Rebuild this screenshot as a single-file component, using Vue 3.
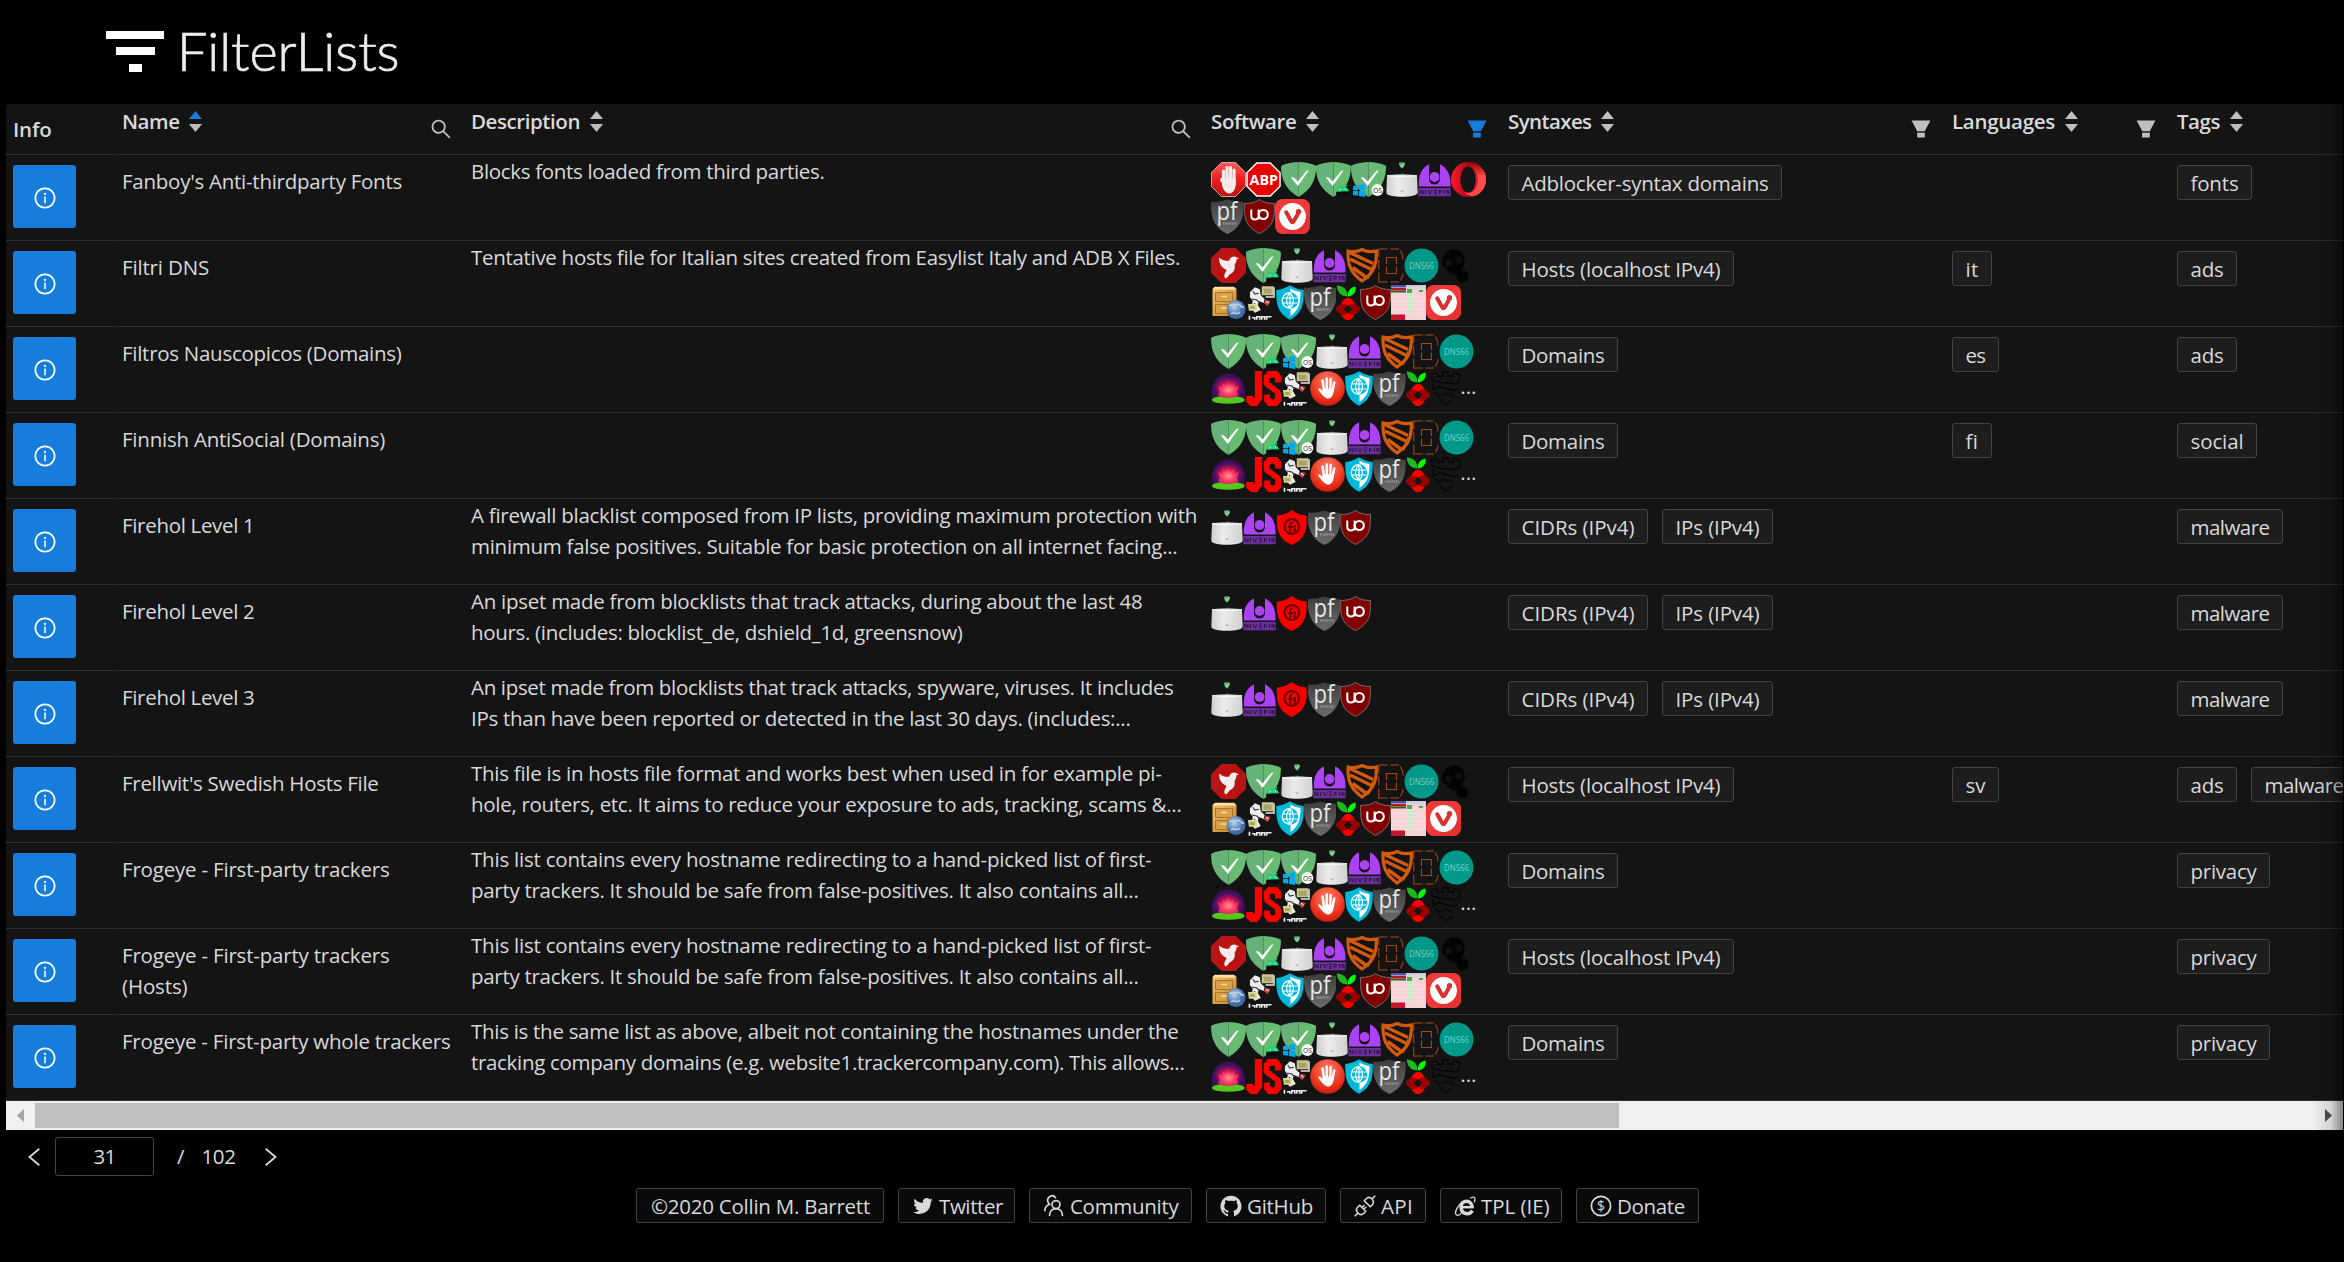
<script setup>
const columns = [
  { key: 'info', title: 'Info', w: 38.5 },
  { key: 'name', title: 'Name', w: 57.5, sort: 'asc', icon: 'search' },
  { key: 'desc', title: 'Description', w: 109, sort: 'none', icon: 'search' },
  { key: 'soft', title: 'Software', w: 85.5, sort: 'none', icon: 'filter', active: true },
  { key: 'syn', title: 'Syntaxes', w: 83.5, sort: 'none', icon: 'filter' },
  { key: 'lang', title: 'Languages', w: 103, sort: 'none', icon: 'filter' },
  { key: 'tags', title: 'Tags', w: 43, sort: 'none' },
]

const iconWidth = {
  hand: 35, abp: 35, ag: 35.3, agAndroid: 34.9, agWin: 35, router: 32, diversion: 33, opera: 35,
  pf: 32.8, ublock: 31, vivaldi: 35, bird: 35, blokada: 32.2, frame: 25.8, dns66: 35, mask: 35,
  cabinet: 35, hostsman: 29.5, globe: 28, pihole: 24, umatrix: 35, lotus: 34.7, js: 35.3,
  palm: 35, tower: 31, fire: 31.5,
}

// lettering that sits on top of an icon's artwork
const iconLabel = {
  abp: { t: 'ABP', x: 3.5, y: 22.8, size: 14.5, len: 28.5, fill: '#fff', weight: 700 },
  agWin: { t: 'OS', x: 22, y: 30.8, size: 7.5, len: 9, fill: '#333', weight: 400 },
  pf: { t: 'pf', x: 5.5, y: 21, size: 26, len: 21, fill: '#e6e6e6', weight: 400 },
  dns66: { t: 'DNS66', x: 5, y: 21, size: 9.5, len: 25, fill: '#7fd0c6', weight: 400 },
}

const fontsSoft = [
  ['hand', 'abp', 'ag', 'agAndroid', 'agWin', 'router', 'diversion', 'opera'],
  ['pf', 'ublock', 'vivaldi'],
]
const hostsSoft = [
  ['bird', 'agAndroid', 'router', 'diversion', 'blokada', 'frame', 'dns66', 'mask'],
  ['cabinet', 'hostsman', 'globe', 'pf', 'pihole', 'ublock', 'umatrix', 'vivaldi'],
]
const domainSoft = [
  ['ag', 'agAndroid', 'agWin', 'router', 'diversion', 'blokada', 'frame', 'dns66'],
  ['lotus', 'js', 'hostsman', 'palm', 'globe', 'pf', 'pihole', 'tower', 'more'],
]
const ipSoft = [['router', 'diversion', 'fire', 'pf', 'ublock']]

const T = {
  adblock: ['Adblocker-syntax domains', 274],
  hosts: ['Hosts (localhost IPv4)', 226],
  domains: ['Domains', 110],
  cidr: ['CIDRs (IPv4)', 140],
  ips: ['IPs (IPv4)', 111],
  it: ['it', 40], es: ['es', 47], fi: ['fi', 40], sv: ['sv', 47],
  fonts: ['fonts', 75], ads: ['ads', 60], social: ['social', 80],
  malware: ['malware', 106], privacy: ['privacy', 93],
}

const frogeye = [
  ['This list contains every hostname redirecting to a hand-picked list of first-', 680.5],
  ['party trackers. It should be safe from false-positives. It also contains all...', 667.5],
]

const rows = [
  { name: [["Fanboy's Anti-thirdparty Fonts", 280]], desc: [['Blocks fonts loaded from third parties.', 353.5]], soft: fontsSoft, syn: [T.adblock], lang: [], tags: [T.fonts] },
  { name: [['Filtri DNS', 87]], desc: [['Tentative hosts file for Italian sites created from Easylist Italy and ADB X Files.', 709]], soft: hostsSoft, syn: [T.hosts], lang: [T.it], tags: [T.ads] },
  { name: [['Filtros Nauscopicos (Domains)', 279.5]], desc: [], soft: domainSoft, syn: [T.domains], lang: [T.es], tags: [T.ads] },
  { name: [['Finnish AntiSocial (Domains)', 263]], desc: [], soft: domainSoft, syn: [T.domains], lang: [T.fi], tags: [T.social] },
  { name: [['Firehol Level 1', 132.5]], desc: [['A firewall blacklist composed from IP lists, providing maximum protection with', 726], ['minimum false positives. Suitable for basic protection on all internet facing...', 706.5]], soft: ipSoft, syn: [T.cidr, T.ips], lang: [], tags: [T.malware] },
  { name: [['Firehol Level 2', 132.5]], desc: [['An ipset made from blocklists that track attacks, during about the last 48', 671.5], ['hours. (includes: blocklist_de, dshield_1d, greensnow)', 491.5]], soft: ipSoft, syn: [T.cidr, T.ips], lang: [], tags: [T.malware] },
  { name: [['Firehol Level 3', 132.5]], desc: [['An ipset made from blocklists that track attacks, spyware, viruses. It includes', 702.5], ['IPs than have been reported or detected in the last 30 days. (includes:...', 659.5]], soft: ipSoft, syn: [T.cidr, T.ips], lang: [], tags: [T.malware] },
  { name: [["Frellwit's Swedish Hosts File", 256.5]], desc: [['This file is in hosts file format and works best when used in for example pi-', 690.5], ['hole, routers, etc. It aims to reduce your exposure to ads, tracking, scams &...', 710.5]], soft: hostsSoft, syn: [T.hosts], lang: [T.sv], tags: [T.ads, T.malware] },
  { name: [['Frogeye - First-party trackers', 267.5]], desc: frogeye, soft: domainSoft, syn: [T.domains], lang: [], tags: [T.privacy] },
  { name: [['Frogeye - First-party trackers', 267.5], ['(Hosts)', 65.5]], desc: frogeye, soft: hostsSoft, syn: [T.hosts], lang: [], tags: [T.privacy] },
  { name: [['Frogeye - First-party whole trackers', 328.5]], desc: [['This is the same list as above, albeit not containing the hostnames under the', 707.5], ['tracking company domains (e.g. website1.trackercompany.com). This allows...', 713.5]], soft: domainSoft, syn: [T.domains], lang: [], tags: [T.privacy] },
]

const links = [
  { text: '©2020 Collin M. Barrett', w: 248, tw: 219 },
  { text: 'Twitter', icon: 'twitter', w: 117, tw: 64 },
  { text: 'Community', icon: 'community', w: 163, tw: 108.5 },
  { text: 'GitHub', icon: 'github', w: 120, tw: 66 },
  { text: 'API', icon: 'api', w: 86, tw: 32 },
  { text: 'TPL (IE)', icon: 'ie', w: 122, tw: 68.5 },
  { text: 'Donate', icon: 'donate', w: 123, tw: 68 },
]

// v-fit="width": tracks the text so that it fills the given width
const vFit = {
  mounted(el, { value }) {
    const natural = el.getBoundingClientRect().width
    el.style.letterSpacing = (value - natural) / el.textContent.length + 'px'
  },
}
</script>

<template>
  <div class="page">
    <svg class="defs" width="0" height="0" aria-hidden="true">
      <defs>
        <linearGradient id="gOct" x1="0" y1="0" x2="0" y2="1"><stop offset="0" stop-color="#ff5a5a" /><stop offset=".5" stop-color="#e81f1f" /><stop offset="1" stop-color="#c01010" /></linearGradient>
        <linearGradient id="gOpera" x1="0" y1="0" x2="1" y2="0"><stop offset="0" stop-color="#ff1b2d" /><stop offset=".55" stop-color="#a70014" /><stop offset="1" stop-color="#ff4b4b" /></linearGradient>
        <linearGradient id="gOpera2" x1="0" y1="0" x2="0" y2="1"><stop offset="0" stop-color="#9c0000" /><stop offset=".4" stop-color="#ff4b4b" /><stop offset="1" stop-color="#ff4b4b" /></linearGradient>
        <linearGradient id="gRouter" x1="0" y1="0" x2="1" y2="0"><stop offset="0" stop-color="#cfcfcf" /><stop offset=".4" stop-color="#ececec" /><stop offset="1" stop-color="#d0d0d0" /></linearGradient>
        <linearGradient id="gPf" x1="0" y1="0" x2="0" y2="1"><stop offset="0" stop-color="#3e3e3e" /><stop offset="1" stop-color="#6c6c6c" /></linearGradient>
        <linearGradient id="gCab" x1="0" y1="0" x2="1" y2="1"><stop offset="0" stop-color="#f3c46d" /><stop offset="1" stop-color="#c0812a" /></linearGradient>
        <radialGradient id="gGlobe" cx=".4" cy=".35"><stop offset="0" stop-color="#bcd3ec" /><stop offset="1" stop-color="#3e6aa0" /></radialGradient>
        <radialGradient id="gLotus" cx=".5" cy=".6" r=".55"><stop offset="0" stop-color="#ff3f6d" /><stop offset=".5" stop-color="#b01050" /><stop offset=".75" stop-color="#4a0f66" /><stop offset="1" stop-color="#34104c" /></radialGradient>
        <radialGradient id="gBloom" cx=".5" cy=".5" r=".5"><stop offset="0" stop-color="#ff9a8a" /><stop offset=".6" stop-color="#ff3f6a" /><stop offset="1" stop-color="#e02a60" /></radialGradient>
        <radialGradient id="gPalm" cx=".5" cy=".3" r=".75"><stop offset="0" stop-color="#f8806c" /><stop offset=".6" stop-color="#ee3a22" /><stop offset="1" stop-color="#c81404" /></radialGradient>
      </defs>

      <symbol id="i-hand" viewBox="0 0 35 35">
        <path d="M10.500.5h14l10 10v14l-10 10h-14l-10-10v-14z" fill="url(#gOct)" stroke="#d8a0a0" />
        <g stroke="#f4f0ee" stroke-width="3.200" stroke-linecap="round" fill="none"><path d="M12.500 9v12M16 5.500v15M19.500 5.500v15M23 8v14M10.700 17.500l3 6" /></g>
        <path d="M11 16h13.600v7c0 5-3 8-6.500 8.500-4 0-7-6-7.100-9z" fill="#f1ecea" />
        <path d="M14.300 9v8M17.700 8v8M21.200 9v8" stroke="#d9bcbc" stroke-width=".5" />
      </symbol>
      <symbol id="i-abp" viewBox="0 0 35 35">
        <path d="M10.800 1h13.400L34 10.800v13.400L24.200 34H10.800L1 24.200V10.800z" fill="#e60000" stroke="#fff" stroke-width="1.500" />
      </symbol>
      <symbol id="i-ag" viewBox="0 0 35 35">
        <path d="M17.500 0C12 0 5.400 1.200 0 3.700 0 9.700-.1 25 17.500 35z" fill="#67b279" />
        <path d="M17.500 0C23 0 29.600 1.200 35 3.700 35 9.700 35.100 25 17.500 35z" fill="#68bc71" />
        <path d="M9.800 15.600c1.300-.8 2.600-.5 3.500.4l3.200 3.400 8.600-10.200c.6-.6 1.400-.8 2.400-.4L16.700 23.900c-2.200-2.500-4.700-5.500-6.900-8.300z" fill="#fff" />
      </symbol>
      <symbol id="i-agAndroid" viewBox="0 0 35 35">
        <use href="#i-ag" width="35" height="35" />
        <path d="M20.500 29.500c.5-7 11.500-7 12.500 0z" fill="#1fd37a" /><path d="M22.500 23l1.500 2.200M31 23l-1.500 2.200" stroke="#1fd37a" />
        <path d="M20.300 29.800h13V34h-13z" fill="#0b0d0c" /><circle cx="24.200" cy="27.500" r=".6" fill="#fff" /><circle cx="29.500" cy="27.500" r=".6" fill="#fff" />
      </symbol>
      <symbol id="i-agWin" viewBox="0 0 35 35">
        <use href="#i-ag" width="35" height="35" />
        <path d="M2 24l5-.8v5H2zM7.800 23l6.400-1v6.200H7.800zM2 29h5v4.800L2 33zM7.800 29h6.400v6l-6.400-1z" fill="#00a8f0" />
        <circle cx="26.400" cy="28" r="5.900" fill="#fafafa" />
      </symbol>
      <symbol id="i-router" viewBox="0 0 32 35">
        <path d="M13 .8c2-.9 4-.9 6 0 0 2.700-1 4.500-3 5.700-2-1.200-3-3-3-5.700z" fill="#5fb873" /><path d="M14.500 3l1.300 1.400L18 2" stroke="#e6ffe9" stroke-width=".7" fill="none" />
        <path d="M15 11.600h3v2h-3z" fill="#555" />
        <path d="M1 13.500c0-1.400 30-1.400 30 0l.7 17c0 5.800-31.400 5.800-31.400 0z" fill="url(#gRouter)" />
        <path d="M1 13.500c4 1.300 26 1.300 30 0" stroke="#fff" fill="none" stroke-width=".8" /><path d="M14 28.500h4l-2 1.800z" fill="#aaa" />
      </symbol>
      <symbol id="i-diversion" viewBox="0 0 33 35">
        <path d="M11 2.200C3.500 6 .3 13 .9 24.500h31.600C33 13 29.500 6 22 2.200v15.500c-1.500 6.500-9.500 6.500-11 0z" fill="#ab43f5" />
        <circle cx="16.600" cy="15" r="4.900" fill="#ab43f5" />
        <path d="M.3 26h32.400v8.200H.3z" fill="#6b2f9a" />
        <path d="M2 32v-4l3 4v-4M7.500 28v4M10 28l2 4 2-4M16 28h3M16 30h3M16 32h3M21.500 32v-4l2.500 1.500-2 1M26.500 28v4M29 32v-4l2 4v-4" stroke="#2d1542" fill="none" />
      </symbol>
      <symbol id="i-opera" viewBox="0 0 35 35">
        <path d="M17.500 0a17.500 17.500 0 1 0 0 35 17.500 17.500 0 1 0 0-35z" fill="url(#gOpera)" />
        <path d="M13 5.700C19 1.200 27 7 27 17.500S19 33.800 13 29.300c3 5.200 10.500 7 16.200 1.400C37 23.300 37 11.700 29.200 4.300 23.500-1.300 16 .5 13 5.700z" fill="url(#gOpera2)" />
        <ellipse cx="17" cy="17.500" rx="7.700" ry="13" fill="#141414" />
      </symbol>
      <symbol id="i-pf" viewBox="0 0 33 35">
        <path d="M0 2.700C6 3 11 2 16.500.3 22 2 27 3 33 2.700 34 20 28 30 16.500 35 5 30-1 20 0 2.700z" fill="url(#gPf)" />
        <path d="M12 24.500h14" stroke="#8e8e8e" stroke-width="2.500" stroke-dasharray="1.500 .7" />
      </symbol>
      <symbol id="i-ublock" viewBox="0 0 31 35">
        <path d="M15.500.5C11.500 3.700 6 4.500.6 4.500c0 13.500-.6 22 14.900 30C31 26.500 30.400 18 30.400 4.500 25 4.500 19.500 3.700 15.500.5z" fill="#800000" stroke="#8f8080" stroke-width=".8" />
        <path d="M7.300 10.500v6.200c0 5 7.300 5 7.300 0v-6.200M14.600 20.500v-5" stroke="#fff" stroke-width="2" fill="none" />
        <circle cx="19.300" cy="15.500" r="4.500" stroke="#fff" stroke-width="2.100" fill="none" />
      </symbol>
      <symbol id="i-vivaldi" viewBox="0 0 35 35">
        <rect width="35" height="35" rx="7.500" fill="#ef3939" /><path d="M35 17v10.500a7.500 7.500 0 0 1-7.500 7.500H10z" fill="#d92f2f" opacity=".6" />
        <circle cx="17.500" cy="17.500" r="13.400" fill="#fff" />
        <path d="M11.200 13.300l5 9c.8 1.400 1.700 1.400 2.500 0 2-3.700 3.500-5.500 4.500-8.500" stroke="#d8302f" stroke-width="4" stroke-linecap="round" fill="none" />
        <circle cx="23.500" cy="12.800" r="2.700" fill="#d8302f" />
      </symbol>
      <symbol id="i-bird" viewBox="0 0 35 35">
        <path d="M10.300 0h14.400L35 10.300v14.400L24.700 35H10.300L0 24.700V10.300z" fill="#b81414" />
        <path d="M8 9.500c4 3 7 3.500 10 3.300 1.500-4 4.500-5.200 7.500-3.600l2.500 1.300-2.500.8c0 2.500-1 4-2 5.700 1.300 4.500-1.500 8-5 9.500-1 1.500-2 3-4 4-1.500-1.700-1.600-3-.5-5.500 1-1.500 1.500-2 1.300-3.500C11 20.500 8 16 8 9.500z" fill="#f2eeee" />
      </symbol>
      <symbol id="i-blokada" viewBox="0 0 32 35">
        <path d="M2 3c5 1 9 1 14-1.500C21 4 25 4 30.200 3c.6 14-2.700 22-14.200 30C5 25 1.200 17 2 3z" fill="none" stroke="#d35a0c" stroke-width="3.200" />
        <path d="M3.500 4.500L27 15.500M4 11l21.500 10.500M6.500 19.500L21 30" stroke="#d35a0c" stroke-width="3.400" />
        <path d="M27 17.500l-5 13" stroke="#d35a0c" stroke-width="2" />
      </symbol>
      <symbol id="i-frame" viewBox="0 0 26 35">
        <path d="M.8 9V.8h9M12.500.8h8.700M22.500 2.500l2.500 5v4M.8 12v9.500M.8 24.500v9.700h9M12.500 34.200h8.700M22.500 32.500l2.500-5V25M8.500 16V9.500h10V16M8.500 18.500v7h10v-7" stroke="#a5480f" stroke-width="1.100" fill="none" />
      </symbol>
      <symbol id="i-dns66" viewBox="0 0 35 35">
        <circle cx="17.500" cy="17.500" r="17" fill="#009888" />
      </symbol>
      <symbol id="i-mask" viewBox="0 0 35 35">
        <path d="M6 6C10 0 20-.5 24 6c3 6 1.500 11-.5 14.500-2 3.500-5 3-6.500 6.500-4 0-8-3-10-6.500C2 18 2 12 6 6z" fill="#030303" /><circle cx="23.500" cy="28.500" r="6" fill="#030303" />
        <circle cx="9.500" cy="15" r="3.800" fill="#0e0e0e" /><circle cx="20" cy="12" r="3.800" fill="#0e0e0e" />
      </symbol>
      <symbol id="i-cabinet" viewBox="0 0 35 35">
        <path d="M3.500 2h20l2 2v27h-24V4z" fill="url(#gCab)" /><path d="M4 1.800h19l2 2.700H2z" fill="#fbe0a4" />
        <path d="M4.500 7.500h17v9h-17zM4.500 19.500h17v9h-17z" fill="#d9a048" stroke="#ab7428" />
        <path d="M10 11.500h6M10 23h6" stroke="#f5dca0" stroke-width="1.500" />
        <circle cx="25" cy="24.500" r="9.500" fill="url(#gGlobe)" /><path d="M18 21c4-4 6 1 9-2 3 1 3 4 6 3M20 29c3-3 6 2 9-2" stroke="#b9cfe6" fill="none" stroke-width="1.500" />
      </symbol>
      <symbol id="i-hostsman" viewBox="0 0 30 35">
        <path d="M16 1h12v9H16z" fill="#c9c68c" /><path d="M18 3.500h8v5h-8z" fill="#a7a36a" /><path d="M28.500 2v10H20" stroke="#e8e8e8" fill="none" stroke-width="1.500" />
        <path d="M4 7l5-5 5 2 1 6 4 4-1 4-5-2-1 4 3 5-6 3-4-5 2-7-3-4z" fill="#ededed" />
        <path d="M7 6l2 3 4-1M6 14l5 1 3 3M9 18l-2 4" stroke="#333" stroke-width="1.100" fill="none" />
        <path d="M2 19h9v7H3z" fill="#d9d68b" /><path d="M4 21h5v3H4z" fill="#a9a66b" />
        <path d="M18 18l3-3 4 1-3 5z" fill="#d94848" /><path d="M20 16l3 2" stroke="#fff" />
        <path d="M3.500 31v4M6 33h3v2M11 35v-3h3v3M16 35v-3h3v3M21 35v-3h5" stroke="#e8e8e8" stroke-width="1.700" fill="none" />
      </symbol>
      <symbol id="i-globe" viewBox="0 0 28 35">
        <path d="M14 .3C10 3 5 4.500.3 5 0 20 2 28 14 34.800 26 28 28 20 27.700 5 23 4.500 18 3 14 .3z" fill="#00b8d8" />
        <path d="M14.500 3.500c3 2 6 3 10 3.600 0 12-2 18.500-10 24z" fill="#fff" />
        <circle cx="14" cy="15.500" r="8.300" fill="#00b8d8" />
        <path d="M14 7.700a7.800 7.800 0 0 0 0 15.600M14 7.700c-4.500 4-4.500 11.600 0 15.600M6.500 13H14M6.500 18H14M14 7.700v15.600" stroke="#fff" fill="none" stroke-width="1.200" />
        <path d="M14 7.700c4.500 4 4.500 11.600 0 15.600M14 13h7.500M14 18h7.500" stroke="#fff" fill="none" stroke-width="1.200" />
      </symbol>
      <symbol id="i-pihole" viewBox="0 0 24 35">
        <path d="M11.500 11.500C5 11.500 1 7 .8.500 8 1 11 4 11.500 11.500z" fill="#1fb81f" /><path d="M12 11.500C11.500 6 14 2.500 19.500 1.500 20.500 7 17 11 12 11.500z" fill="#0f0" />
        <path d="M12 13c4 0 5 3.500 7 5.500s5 3 5 5.500-3.500 4-5.500 6S16 35 12 35s-5-3-6.800-5S0 26.500 0 24s3-3.500 5-5.500S8 13 12 13z" fill="#980200" />
        <path d="M12 13c4 0 5 3.500 7 5.500-3-.5-5 .5-6.500 2.500-2-1.500-4.500-2.500-7.500-2.500 2-2 3-5.500 7-5.500zM5.500 30c3 .5 5-.5 6.500-2.500 2 2 4 3 6.500 2.500-2 2-2.500 5-6.500 5s-4.700-3-6.500-5z" fill="#f00" />
        <path d="M12 20l4 4-4 4.500-4-4.500z" fill="#141414" />
      </symbol>
      <symbol id="i-umatrix" viewBox="0 0 35 35">
        <path d="M0 0h35v35H0z" fill="#f6d3d6" /><path d="M0 0h15v2.200H0z" fill="#3b57c4" /><path d="M15 0h20v2.200H15z" fill="#c3cbe6" />
        <path d="M0 2.700h15v3H0z" fill="#a22" /><path d="M15 2.700h20v3H15z" fill="#dcd8cf" /><path d="M0 6h15v1.500H0z" fill="#246b24" /><path d="M16 4h5v4h-5zM28 5h4v2h-4z" fill="#58a35a" />
        <path d="M17 8h5v20h-5z" fill="#c9ecc9" /><path d="M0 12h35M0 16h35M0 20h35M0 24h35M0 28h35" stroke="#fbe6e8" stroke-width=".5" />
        <path d="M0 29.500h14V35H0z" fill="#c4162c" />
      </symbol>
      <symbol id="i-lotus" viewBox="0 0 35 35">
        <path d="M1 27C-1 14 5 2 17.500 2S36 14 34 27z" fill="url(#gLotus)" />
        <ellipse cx="17.500" cy="29" rx="16.500" ry="4" fill="#56c81c" />
        <path d="M7 15l4.500 1.500.5-4 3.500 2 2-3.500 2 3.500 3.500-2 .5 4L28 15l-2 6 2 3c-4 4-17 4-21 0l2-3z" fill="url(#gBloom)" />
      </symbol>
      <symbol id="i-js" viewBox="0 0 35 35">
        <path d="M8.700 0H16v28l-5 7H4.500L0 30.800V25h6l2.700 2z" fill="#f00" />
        <path d="M22 0h9l4 5v6.500h-6V8l-2-1.500h-2L23.500 8v3.500l10 7.500 1.500 3v8L31 35h-9l-4-5v-6.500h6V27l1.500 1.500h2L29 27v-4.500l-10-7-1.500-3V5z" fill="#f00" />
      </symbol>
      <symbol id="i-palm" viewBox="0 0 35 35">
        <circle cx="17.500" cy="17.500" r="17.300" fill="url(#gPalm)" />
        <g stroke="#fff" stroke-width="2.500" stroke-linecap="round" fill="none"><path d="M12.500 9.500l1.500 10M16.700 7.500v11.500M20.700 8l-.7 11.500M24.200 11.500L22.500 20M9.500 18.500l4 5" /></g>
        <path d="M12.700 17.500h11c.3 5-1.700 9.500-5.200 10-3.500 0-5-2.500-6.500-5z" fill="#fff" />
      </symbol>
      <symbol id="i-tower" viewBox="0 0 31 35">
        <path d="M1 3.500l6-2 1 4 5-.5V1h5v4l5 .5 1-4 6 2-.8 7.500L25 13l-5-1-9-.5L2 9zM2.500 12l1 7 5-3.500 16 4 3.500-2M5 21.500l4 4 5-3 10 3M9 28l7 6 6-4.500" stroke="#050505" stroke-width="1.300" fill="none" />
      </symbol>
      <symbol id="i-fire" viewBox="0 0 31 35">
        <path d="M15.500 0C11.500 3.500 6 5 .8 5.500-.5 20 3 30 15.500 35 28 30 31.500 20 30.200 5.500 25 5 19.500 3.500 15.500 0z" fill="#f80000" />
        <circle cx="15.500" cy="16.500" r="7.400" fill="#f80000" stroke="#6d0000" stroke-width="2.200" />
        <path d="M14 22.500v-8c0-1.500 1-2.300 2.500-2M11.500 17h5M18.500 22.500V15" stroke="#6d0000" stroke-width="2" fill="none" />
      </symbol>

      <symbol id="i-info" viewBox="0 0 1024 1024">
        <path d="M512 64C264.600 64 64 264.600 64 512s200.600 448 448 448 448-200.600 448-448S759.400 64 512 64zm0 820c-205.400 0-372-166.600-372-372s166.600-372 372-372 372 166.600 372 372-166.600 372-372 372z" />
        <path d="M464 336a48 48 0 1 0 96 0 48 48 0 1 0-96 0zm72 112h-48c-4.400 0-8 3.600-8 8v272c0 4.400 3.600 8 8 8h48c4.400 0 8-3.600 8-8V456c0-4.400-3.600-8-8-8z" />
      </symbol>
      <symbol id="i-search" viewBox="0 0 1024 1024">
        <path d="M909.600 854.500L649.900 594.800C690.200 542.700 712 479 712 412c0-80.200-31.300-155.400-87.900-212.100-56.600-56.700-132-87.900-212.100-87.900s-155.500 31.300-212.100 87.900C143.200 256.500 112 331.800 112 412c0 80.100 31.300 155.500 87.900 212.100C256.500 680.800 331.800 712 412 712c67 0 130.600-21.800 182.700-62l259.700 259.600a8.200 8.200 0 0 0 11.600 0l43.600-43.500a8.200 8.200 0 0 0 0-11.600zM570.400 570.400C528 612.700 471.800 636 412 636s-116-23.300-158.400-65.600C211.300 528 188 471.800 188 412s23.300-116.100 65.600-158.400C296 211.300 352.200 188 412 188s116.100 23.200 158.400 65.600S636 352.200 636 412s-23.300 116.100-65.600 158.400z" />
      </symbol>
      <symbol id="i-filter" viewBox="0 0 1024 1024">
        <path d="M349 878h326V668H349zM110 150l238 446h328l238-446z" /><path d="M349 610h326v36H349z" opacity=".35" />
      </symbol>
      <symbol id="i-twitter" viewBox="0 0 1024 1024">
        <path d="M928 254.300c-30.600 13.200-63.900 22.700-98.200 26.400a170.100 170.100 0 0 0 75-94 336.640 336.640 0 0 1-108.200 41.200A170.100 170.100 0 0 0 672 174c-94.500 0-170.500 76.600-170.500 170.600 0 13.200 1.600 26.400 4.200 39.100-141.500-7.400-267.700-75-351.600-178.500a169.320 169.320 0 0 0-23.200 86.100c0 59.200 30.100 111.400 76 142.100a172 172 0 0 1-77.100-21.700v2.100c0 82.900 58.600 151.600 136.700 167.400a180.600 180.600 0 0 1-44.900 5.800c-11.100 0-21.600-1.100-32.200-2.600C211 652 273.900 701.100 348.800 702.700c-58.600 45.900-132 72.900-211.700 72.900-14.300 0-27.500-.5-41.200-2.100C171.500 822 261.200 850 357.800 850 671.400 850 843 590.200 843 364.700c0-7.400 0-14.800-.5-22.200 33.200-24.300 62.300-54.400 85.500-88.200z" />
      </symbol>
      <symbol id="i-github" viewBox="0 0 1024 1024">
        <path d="M511.600 76.300C264.300 76.200 64 276.400 64 523.500 64 718.900 189.300 885 363.800 946c23.500 5.900 19.900-10.800 19.900-22.200v-77.500c-135.700 15.900-141.200-73.900-150.300-88.900C215 726 171.500 718 184.500 703c30.900-15.900 62.400 4 98.900 57.900 26.400 39.100 77.900 32.500 104 26 5.700-23.500 17.900-44.500 34.700-60.800-140.600-25.200-199.200-111-199.200-213 0-49.500 16.300-95 48.300-131.700-20.400-60.500 1.900-112.300 4.900-120 58.100-5.200 118.500 41.600 123.200 45.300 33-8.900 70.700-13.600 112.900-13.600 42.400 0 80.200 4.900 113.500 13.900 11.300-8.600 67.300-48.800 121.300-43.900 2.900 7.700 24.700 58.300 5.500 118 32.400 36.800 48.900 82.700 48.900 132.300 0 102.200-59 188.100-200 212.900a127.500 127.500 0 0 1 38.100 91v112.500c.8 9 0 17.900 15 17.900 177.100-59.700 304.600-227 304.600-424.100 0-247.200-200.400-447.300-447.500-447.300z" />
      </symbol>
      <symbol id="i-community" viewBox="0 0 24 24">
        <g fill="none" stroke="currentColor" stroke-width="1.700" stroke-linecap="round"><circle cx="14" cy="10.600" r="4" /><path d="M7.500 21.500c.2-4.300 3-6.900 6.500-6.900s6.300 2.600 6.500 6.900M13.500 3.600C11-.2 5 2.400 5.700 7.200c.2 1.500 1 2.500 2 3.200M2.800 16.600c.2-3 1.700-5.200 4.500-6.300" /></g>
      </symbol>
      <symbol id="i-api" viewBox="0 0 24 24">
        <g fill="none" stroke="currentColor" stroke-width="1.600" stroke-linecap="round" stroke-linejoin="round"><path d="M11.200 6.700l6.100 6.100 2-2c3.600-3.600-2.500-9.700-6.100-6.100zM19.500 4.500L21.800 2.200M12.800 17.300l-6.100-6.100-2 2c-3.600 3.600 2.500 9.700 6.100 6.100zM4.500 19.500L2.200 21.800M9 13.500l2-2M10.800 15.300l2-2" /></g>
      </symbol>
      <symbol id="i-ie" viewBox="0 0 24 24">
        <path d="M8 13.200h12.900" stroke="currentColor" stroke-width="2.400" />
        <path d="M19.300 16.600c-2.800 5-11.200 4-11.200-3.300 0-8 10.900-8 10.900-.2" fill="none" stroke="currentColor" stroke-width="3.500" />
        <path d="M17 4.300c5.500-3.300 5.600.5 4.200 4M9.500 7.500C5 11 1 18.500 3.200 20.800c1 .9 3.200.2 5-1.200" fill="none" stroke="currentColor" stroke-width="1.300" />
      </symbol>
      <symbol id="i-donate" viewBox="0 0 24 24">
        <circle cx="12" cy="12" r="9.600" fill="none" stroke="currentColor" stroke-width="1.700" />
      </symbol>
    </svg>

    <header class="brand">
      <div class="mark"><i class="b1" /><i class="b2" /><i class="b3" /></div>
      <h1 v-fit="222.5">FilterLists</h1>
    </header>

    <main class="table">
      <div class="row head">
        <div v-for="c in columns" :key="c.key" class="cell" :class="c.key">
          <span v-fit="c.w" class="title">{{ c.title }}</span>
          <svg v-if="c.sort" class="sorter" viewBox="0 0 13 21">
            <path :class="{ on: c.sort === 'asc' }" d="M6.500 0L13 8H0z" /><path d="M6.500 21L13 13H0z" />
          </svg>
          <svg v-if="c.icon" class="tool" :class="{ on: c.active }"><use :href="'#i-' + c.icon" /></svg>
        </div>
      </div>

      <div v-for="(r, i) in rows" :key="i" class="row">
        <div class="cell info">
          <button class="info-btn"><svg><use href="#i-info" /></svg></button>
        </div>
        <div class="cell name">
          <div v-for="l in r.name" :key="l[0]" class="line"><span v-fit="l[1]">{{ l[0] }}</span></div>
        </div>
        <div class="cell desc">
          <div v-for="l in r.desc" :key="l[0]" class="line"><span v-fit="l[1]">{{ l[0] }}</span></div>
        </div>
        <div class="cell soft" :class="{ single: r.soft.length === 1 }">
          <div v-for="(line, n) in r.soft" :key="n" class="icons">
            <template v-for="s in line" :key="s">
              <span v-if="s === 'more'" class="more">...</span>
              <svg v-else :style="{ width: iconWidth[s] + 'px' }">
                <use :href="'#i-' + s" />
                <text
                  v-if="iconLabel[s]" :x="iconLabel[s].x" :y="iconLabel[s].y" :font-size="iconLabel[s].size"
                  :textLength="iconLabel[s].len" lengthAdjust="spacingAndGlyphs" :fill="iconLabel[s].fill" :font-weight="iconLabel[s].weight"
                >{{ iconLabel[s].t }}</text>
              </svg>
            </template>
          </div>
        </div>
        <div v-for="k in ['syn', 'lang', 'tags']" :key="k" class="cell chips" :class="k">
          <span v-for="t in r[k]" :key="t[0]" class="tag" :style="{ width: t[1] + 'px' }"><span v-fit="t[1] - 27">{{ t[0] }}</span></span>
        </div>
      </div>

      <div class="scrollbar">
        <svg class="arrow left" viewBox="0 0 7 13"><path d="M7 0v13L0 6.500z" /></svg>
        <div class="track"><div class="thumb" /></div>
        <svg class="arrow right" viewBox="0 0 7 13"><path d="M0 0v13l7-6.500z" /></svg>
      </div>
      <div class="edge" />
    </main>

    <nav class="pager">
      <svg class="chev" viewBox="0 0 12 18"><path d="M11.300.8L1.500 9l9.800 8.200" /></svg>
      <div class="page-input"><span v-fit="22">31</span></div>
      <span class="slash">/</span>
      <span v-fit="34" class="total">102</span>
      <svg class="chev next" viewBox="0 0 12 18"><path d="M.7.800L10.500 9 .7 17.200" /></svg>
    </nav>

    <footer class="links">
      <a v-for="l in links" :key="l.text" class="tag" :style="{ width: l.w + 'px' }">
        <svg v-if="l.icon" viewBox="0 0 24 24">
          <use :href="'#i-' + l.icon" />
          <text v-if="l.icon === 'donate'" x="12" y="17" text-anchor="middle" font-size="14">$</text>
        </svg>
        <span v-fit="l.tw">{{ l.text }}</span>
      </a>
    </footer>
  </div>
</template>

<style>
body { background: #000; }
</style>

<style scoped>
.page {
  width: 2344px; height: 1262px; overflow: hidden; background: #000; box-sizing: border-box;
  font-family: "Open Sans", "Noto Sans", sans-serif; font-size: 20.5px; line-height: 31px; color: #d9d9d9;
  display: flex; flex-direction: column;
}
.page * { box-sizing: border-box; }
.page span { white-space: nowrap; }
.defs { position: absolute; }

.brand { height: 104px; flex: none; display: flex; padding-left: 106px; }
.mark { width: 58px; padding-top: 30.500px; display: flex; flex-direction: column; align-items: center; gap: 8.500px; }
.mark i { height: 8px; background: #fff; }
.b1 { width: 58px; } .b2 { width: 39px; } .b3 { width: 13px; }
.brand h1 {
  margin: 18px 0 0 13px; align-self: flex-start; font: 300 54px/65px Lato, sans-serif; color: #ececec;
  -webkit-text-stroke: .7px #ececec; white-space: nowrap;
}

.table { position: relative; flex: none; width: 2337px; margin-left: 6px; background: #141414; border-top-left-radius: 3px; overflow: hidden; }
.row { display: grid; grid-template-columns: 108px 349px 740px 297px 444px 225px 174px; height: 86px; }
.head { height: 51px; font-weight: 600; }
.cell { border-bottom: 1px solid #303030; padding-left: 8px; min-width: 0; }
.cell.info { padding-left: 7px; border-right: 1px solid #141414; }
.head .cell { display: flex; padding-top: 2px; }
.head .info { padding-top: 10px; }
.title { align-self: flex-start; }
.sorter { width: 13px; height: 21px; margin: 5px 0 0 9.500px; fill: #bfbfbf; flex: none; }
.on { fill: #177ddc; }
.tool { width: 24px; height: 24px; margin: 11px 11px 0 auto; fill: #bfbfbf; flex: none; }
.name .tool, .desc .tool { margin-right: 10px; }
.tool.on { fill: #177ddc; }

.info-btn { display: flex; align-items: center; justify-content: center; width: 63px; height: 63px; margin: 10px 0 0; padding: 0; border: 0; border-radius: 3px; background: #177ddc; }
.info-btn svg { width: 24px; height: 24px; fill: #fff; margin-top: 2px; }
.row:not(.head) .name { padding-top: 11px; }
.row:not(.head) .desc { padding-top: 1px; }
.line { height: 31px; }
.row:not(.head) .soft { padding-top: 7px; }
.row:not(.head) .soft.single { padding-top: 11px; }
.icons { display: flex; height: 35px; margin-bottom: 2px; }
.icons svg { height: 35px; flex: none; display: block; }
.more { line-height: 31px; margin-left: -1px; }

.chips { display: flex; gap: 14px; padding-top: 10px; }
.tag {
  display: flex; flex: none; align-items: center; justify-content: center; height: 35px; line-height: 33px;
  border: 1px solid #434343; border-radius: 3px; background: #1d1d1d;
}
.tag > span { padding-top: 1px; }
.scrollbar { display: flex; height: 29px; background: #f0f0f0; padding: 2px 11px; align-items: center; }
.arrow { width: 7px; height: 13px; flex: none; }
.left { fill: #a3a3a3; } .right { fill: #505050; }
.track { flex: 1; height: 25px; padding-left: 11px; }
.thumb { width: 1584px; height: 25px; background: #c0c0c0; }
.edge { position: absolute; top: 0; right: 0; bottom: 0; width: 30px; background: linear-gradient(to left, rgba(0, 0, 0, .45), rgba(0, 0, 0, .12) 40%, transparent); }

.pager { display: flex; flex: none; height: 39px; margin-top: 7px; padding-left: 28px; align-items: center; }
.chev { width: 12px; height: 18px; fill: none; stroke: #d9d9d9; stroke-width: 1.800; }
.page-input { width: 99px; height: 39px; margin-left: 15px; border: 1px solid #434343; border-radius: 3px; display: flex; align-items: center; justify-content: center; }
.slash { margin-left: 23px; }
.total { margin-left: 17px; }
.next { margin-left: 29px; }

.links { display: flex; flex: none; margin: 12px 0 0 636px; gap: 14px; }
.links .tag { background: #0a0a0a; justify-content: flex-start; padding-left: 14px; }
.links svg { width: 24px; height: 24px; margin: 0 4px 0 -2px; color: #d9d9d9; fill: currentColor; flex: none; }
</style>
